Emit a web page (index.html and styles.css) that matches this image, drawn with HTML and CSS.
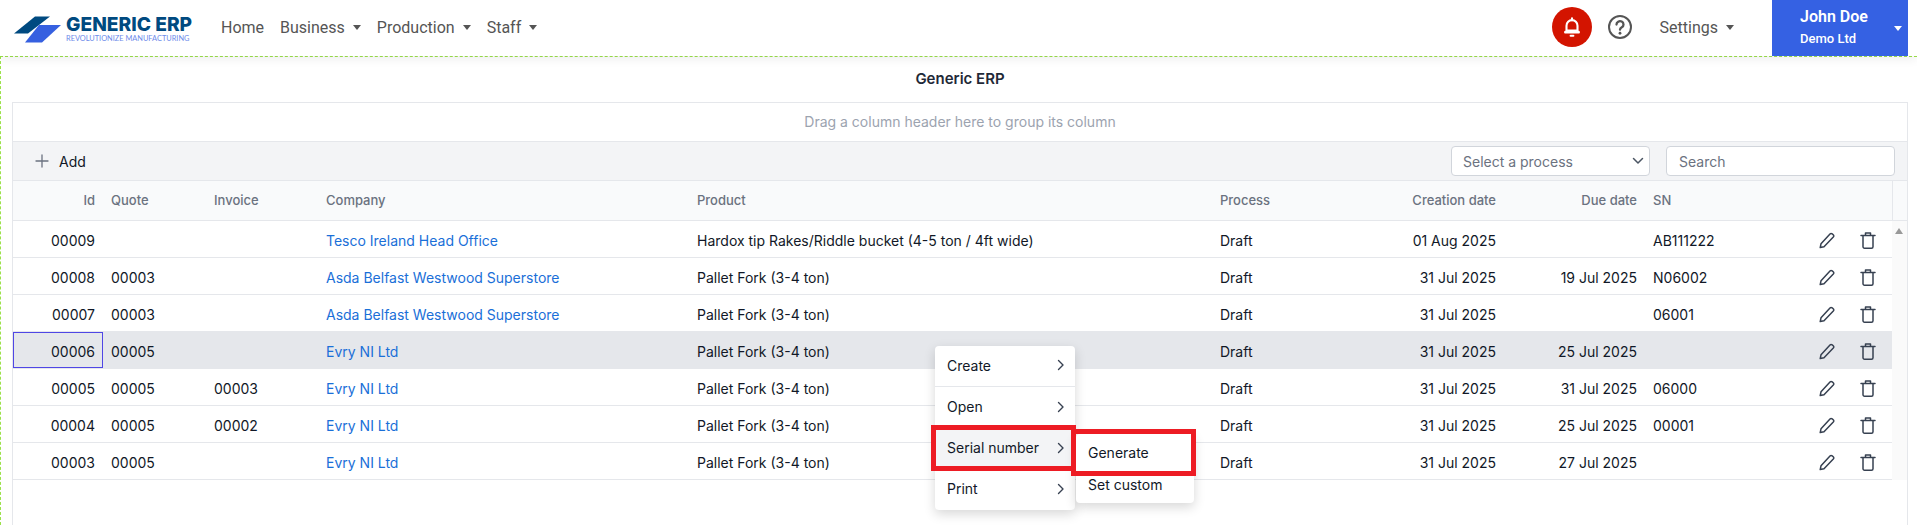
FILE: index.html
```html
<!DOCTYPE html>
<html>
  <head>
    <title>Generic ERP</title>
    <meta charset="UTF-8">
    <link rel="stylesheet" href="styles.css">
  </head>
  <body>
    <nav class="navbar">
      <a class="brand" href="#">
        <svg class="brand-mark" width="50" height="28" viewBox="14 16 50 28">
          <polygon points="14,33.5 35,16.5 50,16.5 28,33.5" fill="#004a80"/>
          <polygon points="39,25 61,25 42,42.5 25,42.5" fill="#3660e0"/>
        </svg>
        <span class="brand-text">
          <span class="brand-name">GENERIC ERP</span>
          <span class="brand-tag">REVOLUTIONIZE MANUFACTURING</span>
        </span>
      </a>
      <a class="nav-link" href="#">Home</a>
      <a class="nav-link caret" href="#">Business</a>
      <a class="nav-link caret" href="#">Production</a>
      <a class="nav-link caret" href="#">Staff</a>
      <span class="nav-fill"></span>
      <button class="bell" type="button">
        <svg width="22" height="22" viewBox="0 0 24 24" fill="none" stroke="#fff" stroke-width="2.300" stroke-linecap="round" stroke-linejoin="round">
          <path d="M18 16H6l-1.500 1.500V18h15v-.5L18 16V10.500a6 6 0 0 0-12 0V16"/>
          <path d="M12 2.500v2M10.500 21.500h3"/>
        </svg>
      </button>
      <button class="help" type="button">
        <svg width="26" height="26" viewBox="0 0 26 26" fill="none" stroke="#555" stroke-width="2" stroke-linecap="round">
          <circle cx="13" cy="13" r="11"/>
          <path d="M9.500 10.500a3.500 3.300 0 1 1 5.300 2.800c-1.200.7-1.800 1.300-1.800 2.400" stroke-width="2.300"/>
          <path d="M13 19.200v.1" stroke-width="2.800"/>
        </svg>
      </button>
      <a class="nav-link caret settings" href="#">Settings</a>
      <a class="user" href="#">
        <span class="user-name">John Doe</span>
        <span class="user-company">Demo Ltd</span>
      </a>
    </nav>

    <main class="content">
      <h1 class="page-title">Generic ERP</h1>
      <div class="card">
        <div class="group-panel">Drag a column header here to group its column</div>
        <div class="toolbar">
          <button class="add-btn" type="button">
            <svg width="14" height="14" viewBox="0 0 14 14" stroke="#6b7280" stroke-width="1.300" stroke-linecap="round">
              <path d="M7 1v12M1 7h12"/>
            </svg>
            Add
          </button>
          <div class="process-select">
            Select a process
            <svg width="12" height="8" viewBox="0 0 12 8" fill="none" stroke="#4b5563" stroke-width="1.500" stroke-linecap="round" stroke-linejoin="round">
              <path d="M1.500 1.500 6 6l4.500-4.500"/>
            </svg>
          </div>
          <input class="search" type="text" placeholder="Search">
        </div>
        <div class="grid">
          <table class="grid-table">
            <colgroup>
              <col class="col-id"><col class="col-quote"><col class="col-invoice"><col class="col-company"><col class="col-product">
              <col class="col-process"><col class="col-created"><col class="col-due"><col class="col-sn"><col class="col-actions">
            </colgroup>
            <thead>
              <tr>
                <th class="num">Id</th><th>Quote</th><th>Invoice</th><th>Company</th><th>Product</th>
                <th>Process</th><th class="num">Creation date</th><th class="num">Due date</th><th>SN</th><th></th>
              </tr>
            </thead>
            <tbody id="rows"></tbody>
          </table>
          <div class="scroll">
            <div class="scroll-head"></div>
            <div class="scroll-up"></div>
          </div>
        </div>
      </div>
    </main>

    <div class="ctx-menu ctx-main">
      <div class="ctx-item ctx-split">Create <svg class="chev" width="8" height="12" viewBox="0 0 8 12"><path d="M1.500 1.500 6 6l-4.500 4.500"/></svg></div>
      <div class="ctx-item">Open <svg class="chev" width="8" height="12" viewBox="0 0 8 12"><path d="M1.500 1.500 6 6l-4.500 4.500"/></svg></div>
      <div class="ctx-item ctx-active">Serial number <svg class="chev" width="8" height="12" viewBox="0 0 8 12"><path d="M1.500 1.500 6 6l-4.500 4.500"/></svg></div>
      <div class="ctx-item">Print <svg class="chev" width="8" height="12" viewBox="0 0 8 12"><path d="M1.500 1.500 6 6l-4.500 4.500"/></svg></div>
    </div>
    <div class="ctx-menu ctx-sub">
      <div class="ctx-subitem">Generate</div>
      <div class="ctx-subitem">Set custom</div>
    </div>
    <div class="mark mark-serial"></div>
    <div class="mark mark-generate"></div>

    <script>
      var rows = [
        ["00009", "", "", "Tesco Ireland Head Office", "Hardox tip Rakes/Riddle bucket (4-5 ton / 4ft wide)", "01 Aug 2025", "", "AB111222"],
        ["00008", "00003", "", "Asda Belfast Westwood Superstore", "Pallet Fork (3-4 ton)", "31 Jul 2025", "19 Jul 2025", "N06002"],
        ["00007", "00003", "", "Asda Belfast Westwood Superstore", "Pallet Fork (3-4 ton)", "31 Jul 2025", "", "06001"],
        ["00006", "00005", "", "Evry NI Ltd", "Pallet Fork (3-4 ton)", "31 Jul 2025", "25 Jul 2025", ""],
        ["00005", "00005", "00003", "Evry NI Ltd", "Pallet Fork (3-4 ton)", "31 Jul 2025", "31 Jul 2025", "06000"],
        ["00004", "00005", "00002", "Evry NI Ltd", "Pallet Fork (3-4 ton)", "31 Jul 2025", "25 Jul 2025", "00001"],
        ["00003", "00005", "", "Evry NI Ltd", "Pallet Fork (3-4 ton)", "31 Jul 2025", "27 Jul 2025", ""]
      ];
      var pencil = '<svg width="16" height="17" viewBox="0 0 16 17" fill="none" stroke="#374151" stroke-width="1.500" stroke-linejoin="round"><path d="M1.200 15.600l.8-3.800L11 2a1.600 1.600 0 0 1 2.200-.1l1 .9a1.600 1.600 0 0 1 .1 2.200L5 14.700z"/></svg>';
      var trash = '<svg width="16" height="17" viewBox="0 0 16 17" fill="none" stroke="#374151" stroke-width="1.500" stroke-linecap="round" stroke-linejoin="round"><path d="M1 3.500h14M3 3.500v11.200A1.500 1.500 0 0 0 4.500 16.200h7a1.500 1.500 0 0 0 1.500-1.500V3.500M5.500 3.500V1h5v2.500"/></svg>';
      var html = "";
      for (var i = 0; i < rows.length; i++) {
        var r = rows[i];
        html += '<tr' + (r[0] == "00006" ? ' class="selected"' : '') + '>';
        html += '<td class="num' + (r[0] == "00006" ? ' focused' : '') + '">' + r[0] + '</td>';
        html += '<td>' + r[1] + '</td><td>' + r[2] + '</td>';
        html += '<td><a class="company" href="#">' + r[3] + '</a></td>';
        html += '<td>' + r[4] + '</td><td>Draft</td>';
        html += '<td class="num">' + r[5] + '</td><td class="num">' + r[6] + '</td><td>' + r[7] + '</td>';
        html += '<td><div class="actions">' + pencil + trash + '</div></td></tr>';
      }
      document.getElementById("rows").innerHTML = html;
    </script>
  </body>
</html>
```

FILE: styles.css
```css
html, body {
  margin: 0;
  height: 525px;
  overflow: hidden;
  background-color: #fff;
}

body {
  font-family: Inter, "Liberation Sans", sans-serif;
  font-size: 14px;
  color: #111827;
}

a {
  text-decoration: none;
}

button {
  border: 0;
  padding: 0;
  background: none;
  font-family: inherit;
}

.navbar {
  position: relative;
  z-index: 2;
  display: flex;
  align-items: center;
  height: 56px;
  box-sizing: border-box;
  padding: 0 9px 2px 14px;
  background-color: #fff;
  box-shadow: 0 3px 10px rgba(0, 0, 0, 0.07);
  font-family: Roboto, sans-serif;
  font-size: 16px;
}

.brand {
  display: flex;
  align-items: center;
  gap: 2px;
  width: 199px;
  flex-shrink: 0;
}

.brand-mark {
  flex-shrink: 0;
  margin-top: 6px;
}

.brand-text {
  display: flex;
  flex-direction: column;
  margin-top: 4px;
  white-space: nowrap;
}

.brand-name {
  font-family: Inter, sans-serif;
  font-size: 19.200px;
  font-weight: 800;
  line-height: 20px;
  color: #004a80;
}

.brand-tag {
  font-family: Lato, sans-serif;
  font-size: 7.400px;
  line-height: 10px;
  color: #6d8bea;
}

.nav-link {
  padding: 8px;
  color: #555;
}

.caret::after {
  content: "";
  display: inline-block;
  margin-left: 8px;
  vertical-align: 3px;
  border-top: 5px solid;
  border-left: 4.500px solid transparent;
  border-right: 4.500px solid transparent;
}

.nav-fill {
  flex: 1;
}

.bell {
  display: flex;
  align-items: center;
  justify-content: center;
  width: 40px;
  height: 40px;
  border-radius: 50%;
  background-color: #d31400;
}

.help {
  display: flex;
  margin-left: 15px;
}

.settings {
  margin-left: 19px;
  margin-right: 30px;
}

.user {
  display: flex;
  flex-direction: column;
  justify-content: center;
  position: relative;
  align-self: stretch;
  width: 136px;
  box-sizing: border-box;
  margin-bottom: -2px;
  padding-left: 28px;
  background-color: #3561e3;
  color: #fff;
}

.user::after {
  content: "";
  position: absolute;
  right: 6px;
  top: 26px;
  border-top: 5px solid #fff;
  border-left: 4.500px solid transparent;
  border-right: 4.500px solid transparent;
}

.user-name {
  font-weight: 600;
  line-height: 24px;
  margin-top: -2px;
}

.user-company {
  font-size: 13px;
  font-weight: 500;
  line-height: 20px;
}

.content {
  height: 469px;
  box-sizing: border-box;
  overflow: hidden;
  padding: 0 9px 0 11px;
  border-top: 1px dashed #9be24a;
  border-left: 1px dashed #9be24a;
}

.page-title {
  margin: 0;
  height: 45px;
  font-size: 15px;
  font-weight: 600;
  line-height: 44px;
  text-align: center;
  color: #1f2937;
}

.card {
  border: 1px solid #e5e7eb;
  height: 500px;
}

.group-panel {
  height: 38px;
  font-size: 14px;
  line-height: 38px;
  text-align: center;
  color: #9ca3af;
}

.toolbar {
  display: flex;
  align-items: center;
  height: 38px;
  padding-right: 12px;
  background-color: #f3f4f6;
  border-top: 1px solid #e5e7eb;
  border-bottom: 1px solid #e5e7eb;
}

.add-btn {
  display: flex;
  align-items: center;
  gap: 10px;
  margin-left: 22px;
  margin-right: auto;
  font-size: 14px;
  color: #111827;
}

.process-select, .search {
  box-sizing: border-box;
  height: 30px;
  background-color: #fff;
  border: 1px solid #d1d5db;
  border-radius: 4px;
  font-family: inherit;
  font-size: 14px;
  color: #6b7280;
}

.process-select {
  display: flex;
  align-items: center;
  justify-content: space-between;
  width: 199px;
  padding: 0 5px 0 11px;
}

.search {
  width: 229px;
  margin-left: 16px;
  padding: 0 12px;
  outline: none;
}

.search::placeholder {
  color: #6b7280;
  opacity: 1;
}

.grid {
  display: flex;
}

.grid-table {
  table-layout: fixed;
  width: 1879px;
  border-collapse: collapse;
}

.col-id { width: 90px; }
.col-quote { width: 103px; }
.col-invoice { width: 112px; }
.col-company { width: 371px; }
.col-product { width: 523px; }
.col-process { width: 159px; }
.col-created { width: 133px; }
.col-due { width: 141px; }
.col-sn { width: 155px; }
.col-actions { width: 92px; }

.grid-table th {
  height: 37px;
  padding: 0 8px 2px;
  background-color: #f9fafb;
  border-bottom: 1px solid #e5e7eb;
  font-size: 13px;
  font-weight: 500;
  text-align: left;
  color: #6b7280;
}

.grid-table td {
  height: 33px;
  padding: 3px 8px 0;
  border-bottom: 1px solid #e5e7eb;
  font-size: 14px;
  white-space: nowrap;
}

.grid-table th.num, .grid-table td.num {
  text-align: right;
}

.selected td {
  background-color: #e5e7eb;
}

.grid-table td.focused {
  box-shadow: inset 0 0 0 1px #4f46e5;
}

.company {
  color: #1a6fd8;
}

.actions {
  display: flex;
  justify-content: flex-end;
  align-items: center;
  gap: 25px;
  padding-right: 8px;
}

.scroll {
  flex: 1;
  background-color: #fafafa;
}

.scroll-head {
  height: 39px;
  background-color: #f9fafb;
  border-left: 1px solid #e5e7eb;
  border-bottom: 1px solid #e5e7eb;
}

.scroll-up {
  width: 0;
  margin: 7px 0 0 3px;
  border-bottom: 6px solid #999;
  border-left: 4.500px solid transparent;
  border-right: 4.500px solid transparent;
}

.ctx-menu {
  position: absolute;
  z-index: 3;
  background-color: #fff;
  border-radius: 4px;
  box-shadow: 0 4px 12px rgba(0, 0, 0, 0.16);
}

.ctx-main {
  left: 935px;
  top: 346px;
  width: 140px;
}

.ctx-item {
  display: flex;
  align-items: center;
  justify-content: space-between;
  height: 41px;
  padding: 0 10px 2px 12px;
  box-sizing: border-box;
}

.ctx-split {
  border-bottom: 1px solid #e5e7eb;
}

.ctx-active {
  background-color: #f3f4f6;
}

.chev {
  fill: none;
  stroke: #374151;
  stroke-width: 1.400;
  stroke-linecap: round;
  stroke-linejoin: round;
}

.ctx-sub {
  left: 1076px;
  top: 434px;
  width: 118px;
  padding: 1px 0 4px;
}

.ctx-subitem {
  height: 32px;
  line-height: 36px;
  padding-left: 12px;
}

.mark {
  position: absolute;
  z-index: 4;
  box-sizing: border-box;
  border: 5px solid #ed1c24;
}

.mark-serial {
  left: 931px;
  top: 425px;
  width: 145px;
  height: 46px;
}

.mark-generate {
  left: 1071px;
  top: 429px;
  width: 125px;
  height: 47px;
}
```
